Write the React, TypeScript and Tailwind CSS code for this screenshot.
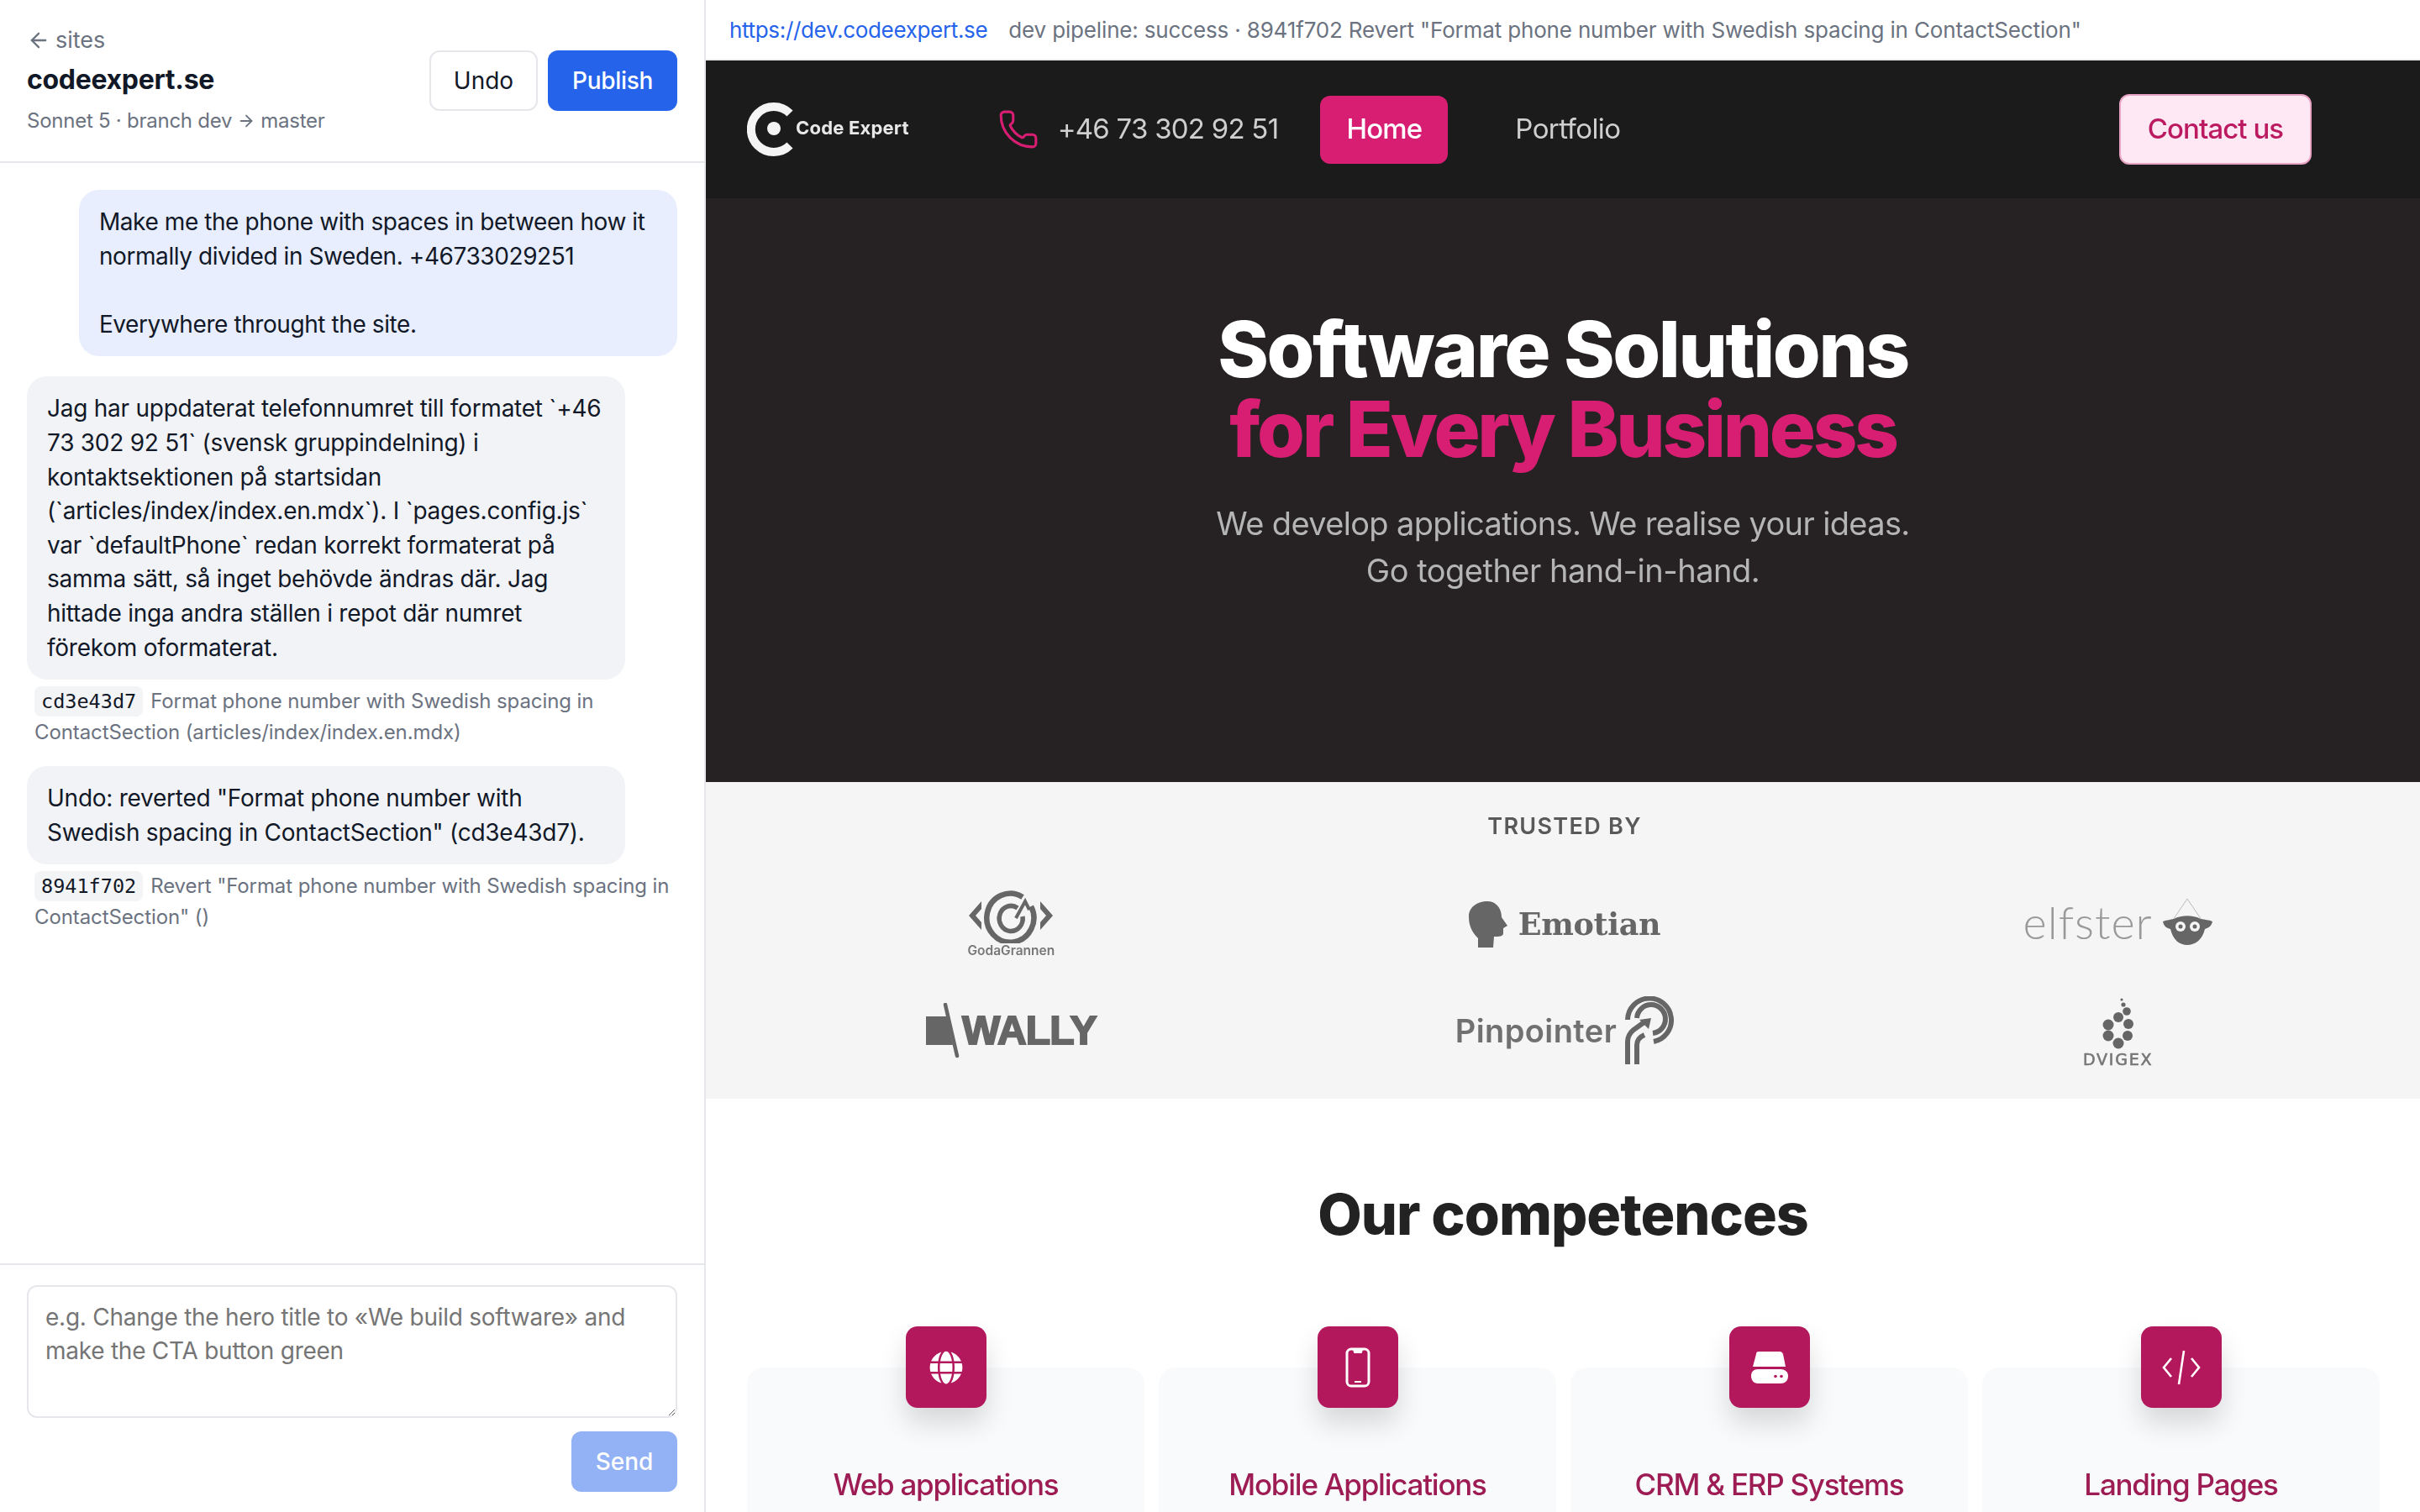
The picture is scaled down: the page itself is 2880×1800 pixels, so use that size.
import React from "react";
import { ArrowLeft, ArrowRight, Phone } from "lucide-react";
import { FaGlobe } from "react-icons/fa";

function CommitMeta({ hash, text }: { hash: string; text: string }) {
  return (
    <div className="mt-[7px] pl-[9px] text-[24px] leading-[37px] tracking-[-0.1px] text-[#6b7280]">
      <code className="mr-[9px] rounded-[8px] bg-[#f3f4f6] px-[8px] py-[4px] font-['DejaVu_Sans_Mono',monospace] text-[23.5px] leading-none tracking-normal text-[#111827]">{hash}</code>
      {text}
    </div>
  );
}

function Bubble({ children, user }: { children: React.ReactNode; user?: boolean }) {
  return (
    <div className={`w-[92%] whitespace-pre-wrap rounded-[24px] px-[24px] py-[18px] text-[28px] leading-[40.6px] text-[#111827] ${user ? "self-end bg-[#e8eefd] tracking-[-0.42px]" : "self-start bg-[#f1f3f7] tracking-[-0.25px]"}`}>
      {children}
    </div>
  );
}

function ChatPanel() {
  return (
    <aside className="flex h-full w-[840px] shrink-0 flex-col border-r-2 border-[#e5e7eb] bg-white">
      <header className="flex h-[194px] shrink-0 items-start justify-between border-b-2 border-[#e5e7eb] px-[32px] pt-[30px]">
        <div className="flex flex-col">
          <div className="flex h-[36px] items-center gap-[6px] text-[27px] text-[#6b7280]">
            <ArrowLeft size={28} strokeWidth={2} />
            <span>sites</span>
          </div>
          <div className="mt-[10px] text-[32px] font-bold leading-[38px] tracking-[-0.3px] text-[#111827]">codeexpert.se</div>
          <div className="mt-[13px] flex h-[34px] items-center text-[24px] tracking-[-0.25px] text-[#6b7280]">
            Sonnet 5 · branch dev<ArrowRight size={22} className="mx-[6px]" />master
          </div>
        </div>
        <div className="mt-[30px] flex gap-[12px]">
          <button className="h-[72px] w-[129px] rounded-[12px] border-2 border-[#e5e7eb] bg-white text-[28px] text-[#111827]">Undo</button>
          <button className="h-[72px] w-[154px] rounded-[12px] bg-[#2563eb] text-[28px] font-medium tracking-[-0.3px] text-white">Publish</button>
        </div>
      </header>
      <main className="flex min-h-0 flex-1 flex-col overflow-hidden px-[32px] pt-[32px]">
        <Bubble user>{"Make me the phone with spaces in between how it normally divided in Sweden. +46733029251\n\nEverywhere throught the site."}</Bubble>
        <div className="mt-[24px]">
          <Bubble>Jag har uppdaterat telefonnumret till formatet `+46 73 302 92 51` (svensk gruppindelning) i kontaktsektionen på startsidan (`articles/index/index.en.mdx`). I `pages.config.js` var `defaultPhone` redan korrekt formaterat på samma sätt, så inget behövde ändras där. Jag hittade inga andra ställen i repot där numret förekom oformaterat.</Bubble>
          <CommitMeta hash="cd3e43d7" text={'Format phone number with Swedish spacing in ContactSection (articles/index/index.en.mdx)'} />
        </div>
        <div className="mt-[22px]">
          <Bubble>Undo: reverted "Format phone number with Swedish spacing in ContactSection" (cd3e43d7).</Bubble>
          <CommitMeta hash="8941f702" text={'Revert "Format phone number with Swedish spacing in ContactSection" ()'} />
        </div>
      </main>
      <footer className="flex h-[296px] shrink-0 flex-col border-t-2 border-[#e5e7eb] px-[32px] pt-[24px]">
        <textarea
          className="h-[158px] w-full resize-y rounded-[12px] border-2 border-[#e5e7eb] bg-white px-[20px] py-[16px] text-[28px] leading-[40px] tracking-[-0.25px] text-[#111827] outline-none placeholder:text-[#757575]"
          placeholder="e.g. Change the hero title to «We build software» and make the CTA button green"
        />
        <div className="mt-[16px] flex justify-end">
          <button disabled className="h-[72px] w-[126px] rounded-[12px] bg-[#93b1f5] text-[28px] font-medium text-white">Send</button>
        </div>
      </footer>
    </aside>
  );
}

function Logo() {
  return (
    <div className="flex items-center">
      <svg width="56" height="66" viewBox="889 121 56 66" className="shrink-0">
        <path d="M940 135 A27 27 0 1 0 940 173" fill="none" stroke="#f4f4f4" strokeWidth="10" />
        <circle cx="921" cy="153" r="8" fill="#f4f4f4" />
      </svg>
      <span className="ml-[2px] -translate-y-[2px] text-[22px] font-bold tracking-[0.2px] text-[#e8e8e8]">Code Expert</span>
    </div>
  );
}

function SiteNav() {
  return (
    <nav className="flex h-[164px] shrink-0 items-center bg-[#1b1b1b] pl-[49px] pr-[129px]">
      <Logo />
      <Phone size={50} strokeWidth={1.5} className="ml-[105px] text-[#d81e73]" />
      <span className="ml-[22px] text-[33px] tracking-[-0.75px] text-[#cfcfcf]">+46 73 302 92 51</span>
      <span className="ml-[50px] flex h-[81px] w-[152px] items-center justify-center rounded-[12px] bg-[#d81e73] text-[33px] font-medium tracking-[-0.85px] text-white">Home</span>
      <span className="ml-[80px] text-[33px] tracking-[-0.6px] text-[#cfcfcf]">Portfolio</span>
      <span className="ml-auto flex h-[84px] w-[229px] items-center justify-center rounded-[12px] border-2 border-[#e9a3c4] bg-[#fde8f3] text-[33px] font-medium tracking-[-0.95px] text-[#bb1a61]">Contact us</span>
    </nav>
  );
}

function Hero() {
  return (
    <section className="flex h-[695px] shrink-0 flex-col items-center bg-[#262223] pt-[132px]">
      <h1 className="text-[92px] font-extrabold leading-[95px] tracking-[-2.4px] text-white">Software Solutions</h1>
      <h1 className="text-[92px] font-extrabold leading-[95px] tracking-[-3.3px] text-[#d81e73]">for Every Business</h1>
      <p className="mt-[37px] text-[38px] leading-[56px] tracking-[-0.64px] text-[#b5b5b5]">We develop applications. We realise your ideas.</p>
      <p className="text-[38px] leading-[56px] tracking-[-0.5px] text-[#b5b5b5]">Go together hand-in-hand.</p>
    </section>
  );
}

const logoGray = "#666666";

function Goda() {
  return (
    <div className="flex translate-y-[3px] flex-col items-center">
      <svg width="108" height="64" viewBox="0 0 108 64">
        <path d="M19 14 L4 31 L19 48 L19 39 L12 31 L19 23 Z" fill={logoGray} />
        <path d="M89 14 L104 31 L89 48 L89 39 L96 31 L89 23 Z" fill={logoGray} />
        <path d="M68 9 A28 29 0 1 0 78 20" fill="none" stroke={logoGray} strokeWidth="6.5" />
        <path d="M62 22 A14 15 0 1 0 68 32" fill="none" stroke={logoGray} strokeWidth="5.5" />
        <path d="M60 34 L71 14 L76 24" fill="none" stroke={logoGray} strokeWidth="4" />
      </svg>
      <span className="-mt-[1px] text-[15.5px] font-semibold leading-[20px] text-[#777777]">GodaGrannen</span>
    </div>
  );
}

function Wally() {
  return (
    <div className="flex items-center">
      <svg width="40" height="66" viewBox="0 0 40 66">
        <path d="M0 16 H25 L32 50 H0 Z" fill={logoGray} />
        <path d="M23 2 L37 63" stroke={logoGray} strokeWidth="4.5" strokeLinecap="round" />
      </svg>
      <span className="ml-[3px] font-['Liberation_Sans',sans-serif] text-[48px] font-black leading-[50px] tracking-[-0.8px] text-[#666666] [-webkit-text-stroke:2px_#666666]">WALLY</span>
    </div>
  );
}

function Emotian() {
  return (
    <div className="flex translate-y-[3px] items-center">
      <svg width="46" height="56" viewBox="0 0 46 56">
        <path d="M22 0 C34 0 39 10 39 19 L46 29 L41 32 L41 38 C41 42 36 42 30 42 L29 55 L11 55 L11 44 C3 36 0 28 0 18 C0 7 10 0 22 0 Z" fill={logoGray} />
      </svg>
      <span className="ml-[13px] font-['DejaVu_Serif',serif] text-[36.5px] font-bold leading-[46px] tracking-[-0.3px] text-[#666666]">Emotian</span>
    </div>
  );
}

function Elfster() {
  return (
    <div className="flex items-center">
      <span className="font-['Lato',sans-serif] text-[54px] font-light leading-[56px] tracking-[1px] text-[#999999]">elfster</span>
      <svg width="60" height="58" viewBox="0 0 60 58" className="ml-[12px]">
        <path d="M29 1 L12 26 M29 1 L46 26" stroke="#bbbbbb" strokeWidth="1" fill="none" />
        <path d="M0 28 C5 26 9 26 13 25 C22 20 36 20 45 25 C50 26 55 26 59 28 C58 34 53 36 50 37 C47 50 38 56 29 56 C20 56 12 50 9 37 C5 36 1 34 0 28 Z" fill={logoGray} />
        <circle cx="21" cy="34" r="6" fill="#f5f5f5" />
        <circle cx="38" cy="34" r="6" fill="#f5f5f5" />
        <circle cx="21" cy="34" r="2.5" fill={logoGray} />
        <circle cx="38" cy="34" r="2.5" fill={logoGray} />
      </svg>
    </div>
  );
}

function Pinpointer() {
  return (
    <div className="flex items-center">
      <span className="font-['Inter',sans-serif] text-[38px] font-semibold leading-[46px] tracking-[0.4px] text-[#707070]">Pinpointer</span>
      <svg width="60" height="82" viewBox="0 0 60 82" className="ml-[8px]">
        <g fill="none" stroke={logoGray} strokeWidth="6">
          <path d="M5 28 A26 26 0 1 1 36 54" />
          <path d="M16 26 A17 17 0 1 1 35 44" />
          <path d="M5 81 V54 Q5 46 12 40 L26 30" />
          <path d="M16 81 V58 Q16 50 25 46" />
        </g>
        <path d="M19 28 L33 26 L30 39 Z" fill={logoGray} />
      </svg>
    </div>
  );
}

function Dvigex() {
  const dots: [number, number, number][] = [
    [25, 8, 1.6], [27, 14, 2.6], [31, 22, 4.8], [21, 29, 6], [9, 38, 6.5], [33, 37, 6], [9, 51, 6.5], [32, 51, 6], [21, 60, 6.5],
  ];
  return (
    <div className="flex flex-col items-center">
      <svg width="42" height="68" viewBox="0 0 42 68">
        {dots.map(([cx, cy, r]) => <circle key={`${cx}-${cy}`} cx={cx} cy={cy} r={r} fill={logoGray} />)}
      </svg>
      <span className="font-['DejaVu_Sans',sans-serif] text-[19px] font-normal leading-[22px] tracking-[1.8px] text-[#777777] [-webkit-text-stroke:0.6px_#777777]">DVIGEX</span>
    </div>
  );
}

function Trusted() {
  return (
    <section className="flex h-[377px] shrink-0 flex-col bg-[#f5f5f5] pl-[34px] pr-[30px] pt-[37px]">
      <div className="text-center text-[27px] font-semibold leading-[32px] tracking-[1.3px] text-[#595959]">TRUSTED BY</div>
      <div className="mt-[33px] grid grid-cols-3 grid-rows-[129px_129px] items-center justify-items-center">
        <Goda />
        <Emotian />
        <Elfster />
        <Wally />
        <Pinpointer />
        <Dvigex />
      </div>
    </section>
  );
}

function PhoneIcon() {
  return (
    <svg width="30" height="48" viewBox="0 0 30 48" fill="none">
      <rect x="2" y="2" width="26" height="44" rx="5" stroke="white" strokeWidth="3" />
      <path d="M9 3 H21 L19.5 7 H10.5 Z" fill="white" />
      <path d="M11 41 H19" stroke="white" strokeWidth="2" />
    </svg>
  );
}

function DriveIcon() {
  return (
    <svg width="46" height="40" viewBox="0 0 46 40">
      <path d="M10 1 H35 C37 1 38 2 39 4 L42 19 H3 L7 4 C7 2 8 1 10 1 Z" fill="white" />
      <path d="M9 22 H36 C41 22 45 25 45 30 C45 36 41 39 36 39 H9 C4 39 1 35 1 30 C1 25 4 22 9 22 Z" fill="white" />
      <circle cx="30" cy="30.5" r="1.8" fill="#b3175c" />
      <circle cx="37" cy="30.5" r="1.8" fill="#b3175c" />
    </svg>
  );
}

function CodeIcon() {
  return (
    <svg width="46" height="42" viewBox="0 0 46 42" fill="none" stroke="white" strokeWidth="2.6">
      <path d="M11 10 L2 21 L11 32" />
      <path d="M35 10 L44 21 L35 32" />
      <path d="M26 1 L20 41" />
    </svg>
  );
}

function Card({ icon, title }: { icon: React.ReactNode; title: string }) {
  return (
    <div className="flex h-[300px] flex-col items-center rounded-[20px] bg-[#f9fafb]">
      <div className="-mt-[49px] flex h-[97px] w-[96px] items-center justify-center rounded-[14px] bg-[#b3175c] shadow-[0_18px_32px_rgba(0,0,0,0.14)]">{icon}</div>
      <div className="mt-[67px] text-[35px] font-medium leading-[48px] tracking-[-1.25px] text-[#9d1c54]">{title}</div>
    </div>
  );
}

function Competences() {
  return (
    <section className="min-h-0 flex-1 overflow-hidden bg-white">
      <h2 className="mt-[105px] text-center text-[68px] font-extrabold leading-[64px] tracking-[-1px] text-[#222222]">Our competences</h2>
      <div className="mt-[151px] grid grid-cols-4 gap-[17px] pl-[49px] pr-[48px]">
        <Card icon={<FaGlobe size={40} color="white" />} title="Web applications" />
        <Card icon={<PhoneIcon />} title="Mobile Applications" />
        <Card icon={<DriveIcon />} title="CRM & ERP Systems" />
        <Card icon={<CodeIcon />} title="Landing Pages" />
      </div>
    </section>
  );
}

function Preview() {
  return (
    <div className="flex h-full min-w-0 flex-1 flex-col">
      <div className="flex h-[72px] shrink-0 items-center gap-[25px] border-b-2 border-[#eeeeee] bg-white pl-[28px] text-[26px]">
        <span className="tracking-[-0.33px] text-[#2563eb]">https://dev.codeexpert.se</span>
        <span className="tracking-[-0.16px] text-[#6b7280]">dev pipeline: success · 8941f702 Revert "Format phone number with Swedish spacing in ContactSection"</span>
      </div>
      <div className="flex min-h-0 flex-1 flex-col blur-[0.5px]">
        <SiteNav />
        <Hero />
        <Trusted />
        <Competences />
      </div>
    </div>
  );
}

export default function App() {
  return (
    <div className="flex h-[1800px] w-[2880px] overflow-hidden bg-white font-['Inter',sans-serif]">
      <ChatPanel />
      <Preview />
    </div>
  );
}
